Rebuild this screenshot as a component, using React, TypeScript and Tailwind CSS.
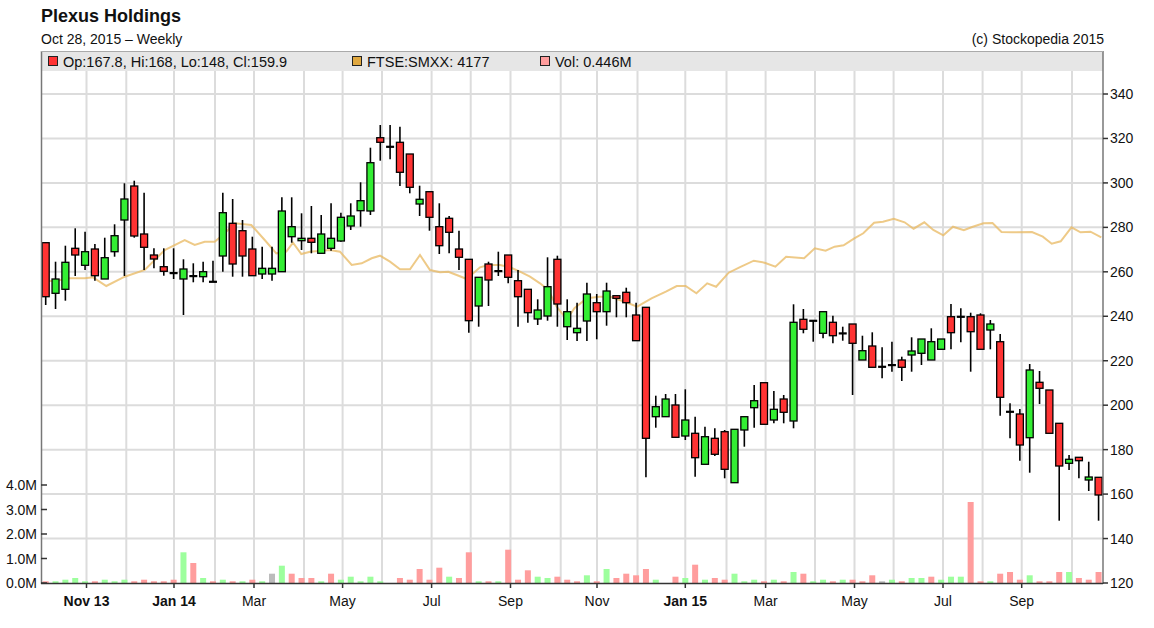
import React from "react";

type C = [number, number, number, number, string];
const candles: C[] = [
[242.7,296.7,242.7,305,"r"],[279,293.3,261.7,309,"g"],[262.3,289.3,245.7,300.7,"g"],[248.3,255,228.3,276,"r"],[251.7,265.3,231.7,270,"g"],
[249,275.7,244,280.7,"r"],[257.7,279,237.7,279,"g"],[235.7,251.7,224.3,256.7,"g"],[199,220,183.3,276,"g"],[186,236,180.7,237.7,"r"],
[234,247.3,192.7,270,"r"],[255,259,248.3,268.3,"r"],[266.7,271.3,248.3,275.7,"r"],[273,273,248.3,279,"d"],[269,279,259.3,315,"g"],
[276,276,263.3,282.3,"d"],[271.7,276.7,261.7,282.3,"g"],[281.7,281.7,260.7,281.7,"d"],[212.7,256,192.7,271.7,"g"],[223.3,264,199,276.7,"r"],
[230.7,256,220,276.7,"r"],[249,275.7,236.7,275.7,"r"],[268.3,274,246.7,279,"g"],[268.3,274,246.7,280.7,"g"],[211,271.7,197.3,271.7,"g"],
[226.7,236.7,197.3,242.7,"g"],[238.3,240.7,213.3,250,"g"],[238.3,242.3,206,253.3,"r"],[234,253.3,215,253.3,"g"],[238.3,248.3,203.3,250.7,"g"],
[217.3,241,212.7,241.7,"g"],[216,226,203.3,230,"g"],[200.7,210.7,182.3,226.7,"g"],[162.7,211,147.7,215,"g"],[137.7,142.3,125,160.7,"r"],
[146.7,146.7,125,159.3,"d"],[142.3,172.3,126.7,186,"r"],[154,187.3,154,193.3,"r"],[199.3,204,185.7,216,"g"],[191.7,217.3,191.7,230.7,"r"],
[226.7,245.7,203.3,254,"r"],[218.3,232.3,216,253.3,"r"],[249,257.3,230.7,270,"r"],[259.3,320.7,259.3,332.7,"r"],[277.3,306,277.3,326.7,"g"],
[264,280,261.7,306,"r"],[271,271,251.7,276,"d"],[255,277.3,255,283.3,"r"],[280.7,296.7,270,326.7,"r"],[289.3,312.7,289.3,322.7,"r"],
[310,319,299.3,325,"g"],[286.7,316,257.3,320.7,"g"],[259.3,304,255.7,326.7,"r"],[311.7,326.7,299.3,340,"g"],[328.3,332.7,302.7,341,"g"],
[294,321,282.7,341,"g"],[302.7,311.7,294,339.3,"r"],[291,311.7,282.7,325.7,"g"],[295.7,298.3,295.7,317.3,"r"],[292.3,302.7,287.7,317.3,"r"],
[315,340.7,302.7,340.7,"r"],[307.3,438.3,307.3,477.3,"r"],[406.7,416.7,395.7,427.7,"g"],[399,416.7,394,416.7,"g"],[405,437.3,394,437.3,"r"],
[420,436,389.3,440,"g"],[433.3,457.7,416.7,476.7,"r"],[436.7,464.3,426.7,464.3,"g"],[438.3,454.3,428.3,456,"r"],[431.7,469.3,430,478.3,"r"],
[429.3,482.7,429.3,482.7,"g"],[416.7,430,416.7,446.7,"g"],[400.7,407.7,385,427.7,"g"],[382.7,424.3,382.7,424.3,"r"],[409.3,420,391,423.3,"g"],
[399,412.3,395,423.3,"r"],[322.3,421,304.3,428.3,"g"],[319.3,329.3,309,333.3,"r"],[320.7,320.7,320.7,341.7,"d"],[311.7,333.3,311.7,338.3,"g"],
[322.3,335.7,315.7,343.3,"r"],[333.3,333.3,326.7,340.7,"d"],[324,343.3,324,395,"r"],[350.7,360,335.7,360,"g"],[346,367.3,332.3,367.3,"r"],
[366.7,366.7,347.3,378.3,"d"],[365,365,341.7,371.7,"d"],[360,367.3,356.7,381,"r"],[351,355,337.3,371.7,"g"],[339,353.3,339,365,"g"],
[341.7,360,328.3,360,"g"],[339,349.3,339,349.3,"g"],[316.7,332.7,304,349.3,"r"],[316.7,316.7,308.3,342.3,"d"],[316.7,331.7,312.7,371.7,"r"],
[315,349.3,313.3,349.3,"r"],[324,330,320,349.3,"g"],[341.7,397.3,334,415.7,"r"],[411.7,411.7,403.3,438.3,"d"],[414,445,409,460.7,"r"],
[370,437.7,364,472.7,"g"],[382.3,388.3,371,404,"r"],[390,433.3,390,433.3,"r"],[423.3,466,423.3,520.7,"r"],[459.3,463.3,455,470,"g"],
[457.3,460.7,457.3,478.3,"r"],[477,480,461.7,491,"g"],[477.3,495,477.3,520.7,"r"],
];

const vols: [number, string][] = [
[1.7,"r"],[1.7,"g"],[3.3,"g"],[5,"g"],[1.7,"g"],[1.7,"r"],[3.3,"g"],[1.7,"g"],[3.3,"g"],[1.7,"r"],
[3.3,"r"],[1.7,"r"],[1.7,"r"],[3.3,"r"],[30.7,"g"],[20,"r"],[5,"g"],[1.7,"r"],[3.3,"g"],[1.7,"r"],
[1.7,"g"],[3.3,"r"],[1.7,"g"],[9.3,"x"],[17.3,"g"],[9.3,"r"],[5,"r"],[5,"r"],[1.7,"g"],[9.3,"r"],
[3.3,"g"],[6.3,"g"],[1.7,"g"],[6.3,"g"],[1.7,"g"],[0,"r"],[5,"r"],[3.3,"r"],[14,"r"],[3.3,"r"],
[15.3,"r"],[6.3,"g"],[5,"r"],[30.7,"r"],[1.7,"g"],[1.7,"r"],[1.7,"g"],[33.3,"r"],[3.3,"r"],[12.7,"r"],
[6.3,"g"],[5,"g"],[6.3,"r"],[3.3,"r"],[1.7,"r"],[7.7,"g"],[1.7,"r"],[14,"g"],[5,"r"],[9.3,"r"],
[7.7,"r"],[14,"r"],[3.3,"g"],[0,"r"],[6.3,"r"],[5,"g"],[18.3,"r"],[3.3,"g"],[5,"r"],[3.3,"r"],
[9.3,"g"],[1.7,"g"],[3.3,"g"],[1.7,"r"],[3.3,"g"],[1.7,"r"],[11,"g"],[9.3,"r"],[1.7,"g"],[3.3,"g"],
[1.7,"r"],[3.3,"g"],[3.3,"r"],[1.7,"r"],[7.7,"r"],[1.7,"x"],[3.3,"g"],[1.7,"r"],[5,"g"],[5,"g"],
[6.3,"r"],[3.3,"g"],[6.3,"g"],[6.3,"g"],[81,"r"],[1.7,"r"],[1.7,"g"],[9.3,"r"],[11,"r"],[3.3,"r"],
[7.7,"g"],[1.7,"r"],[1.7,"r"],[11,"r"],[11,"g"],[5,"r"],[3.3,"r"],[11,"r"],
];

const ftse: [number, number][] = [
[41,281],[55,281],[69.7,278.3],[84.7,278.3],[93,277.3],[106.3,286],[124.7,276.7],[144.7,270],[164.7,250],[184.7,240],[194.7,245],[204.7,241.7],
[214.7,241.7],[224.7,233.3],[234.7,223.3],[251.3,225],[264.7,240],[276.3,253.3],[286.3,251.7],[293,242.7],[301.3,254],[310,251.7],
[330,250],[340,251.7],[351.7,265],[361.7,263.3],[371.7,258.3],[380,255.7],[390,261.7],[400,269.3],[410,269.3],[420,255],[430,270],
[440,272.3],[448.3,271.7],[456.7,275],[465,278.3],[473.3,273.3],[480,267.3],[488.3,265],[500,265],[510,267.3],[520,271.7],[530,276.7],
[540,283.3],[548.3,290],[556.7,306.7],[563.3,315],[568,318],[574.4,308.3],[586.9,298.3],[599.5,296.7],[610.3,296.7],[624.6,301.7],
[637.2,306.7],[651.5,298.3],[665.9,291.7],[676.7,286],[685.6,286],[696.4,293.3],[707.2,283.3],[716.1,286.7],[728.7,272.7],[739.5,267.3],
[753.8,260.7],[764.6,262.7],[775.4,266.7],[786.1,256.7],[804.1,258.3],[814.8,248.3],[825.6,250.7],[834.6,246.7],[843.6,245.3],
[854.3,238.3],[863.3,233.3],[874.1,222.7],[883,221.7],[893.8,218.7],[904.6,222.3],[913.6,228.7],[924.3,222.3],[933.3,230],[943.3,235.3],
[953,226.7],[963.8,230.3],[972.8,226.7],[983.5,223.3],[992.5,223],[1001.5,232],[1012.3,232.3],[1032,232],[1042.8,236.7],[1051.7,243.7],
[1060.7,241.3],[1071.5,227.3],[1080.5,232.3],[1090.5,231.7],[1101.3,237.3],
];

const vGrid = [86.5,126.3,174,215,254,304,342.6,382,431.6,470.7,510.5,560.7,597,637.5,685.3,726.5,765.6,815,854.5,893.6,943,982.6,1021.7,1072];
const months: [number, string, boolean][] = [
[86.5,"Nov 13",true],[174,"Jan 14",true],[254,"Mar",false],[342.6,"May",false],[431.6,"Jul",false],[510.5,"Sep",false],
[597,"Nov",false],[685.3,"Jan 15",true],[765.6,"Mar",false],[854.5,"May",false],[943,"Jul",false],[1021.7,"Sep",false],
];
const prices = [340,320,300,280,260,240,220,200,180,160,140,120];
const py = (p: number) => 583 - (p - 120) * 2.2227;
const volTicks: [number, string][] = [[485,"4.0M"],[509.5,"3.0M"],[534,"2.0M"],[558.5,"1.0M"],[583,"0.0M"]];

const cx = (i: number) => 45.7 + i * 9.84;
const fill = { r: "#ff3333", g: "#33ee33" } as Record<string, string>;
const vfill = { r: "#ff9d9d", g: "#9dff9d", x: "#bbbbbb" } as Record<string, string>;

export default function App() {
  return (
    <div className="w-[1154px] h-[628px] bg-white relative overflow-hidden" style={{ fontFamily: '"Liberation Sans", Arial, sans-serif' }}>
      <div className="h-[51px] pl-[41px] pr-[50px] pt-[5px] flex flex-col">
        <div className="text-[18px] font-bold text-[#111] leading-[22px]">Plexus Holdings</div>
        <div className="flex justify-between text-[14px] text-[#111] leading-[16px] mt-[4px]">
          <span>Oct 28, 2015 – Weekly</span>
          <span>(c) Stockopedia 2015</span>
        </div>
      </div>
      <svg width="1154" height="577" viewBox="0 51 1154 577" className="block">
        <defs>
          <clipPath id="plot"><rect x="41" y="71" width="1062" height="512" /></clipPath>
        </defs>
        <rect x="41" y="51" width="1062" height="20" fill="#e6e6e6" />
        <g stroke="#dcdcdc" strokeWidth="2">
          {vGrid.map((x) => <line key={x} x1={x} y1={71} x2={x} y2={583} />)}
          {prices.slice(0, 11).map((p) => <line key={p} x1={41} y1={py(p)} x2={1103} y2={py(p)} />)}
        </g>
        <g clipPath="url(#plot)">
          {vols.map(([h, c], i) => h > 0 && <rect key={i} x={cx(i) - 3} y={583 - h} width={6} height={h} fill={vfill[c]} />)}
          <polyline points={ftse.map((p) => p.join(",")).join(" ")} fill="none" stroke="#e8b860" strokeOpacity="0.75" strokeWidth="2" />
          {candles.map(([t, b, h, l, c], i) => {
            const x = cx(i);
            return (
              <g key={i}>
                <line x1={x} y1={h} x2={x} y2={l} stroke="#000" strokeWidth="1.6" />
                {c === "d" ? (
                  <rect x={x - 4} y={t - 1} width={8} height={2.2} fill="#000" />
                ) : (
                  <rect x={x - 3.5} y={t} width={7} height={Math.max(b - t, 2)} fill={fill[c]} stroke="#000" strokeWidth="1.3" />
                )}
              </g>
            );
          })}
        </g>
        <line x1="41.5" y1="51" x2="41.5" y2="584" stroke="#777" strokeWidth="1.5" />
        <line x1="1103" y1="51" x2="1103" y2="584" stroke="#777" strokeWidth="1.5" />
        <line x1="41" y1="51.5" x2="1103" y2="51.5" stroke="#aaa" strokeWidth="1" />
        <line x1="41" y1="583.5" x2="1103" y2="583.5" stroke="#333" strokeWidth="1.5" />
        <g fontSize="14" fill="#111">
          {prices.map((p) => (
            <g key={p}>
              <line x1={1103} y1={py(p)} x2={1108} y2={py(p)} stroke="#333" strokeWidth="1.5" />
              <text x={1110} y={py(p) + 5}>{p}</text>
            </g>
          ))}
          {volTicks.map(([y, t]) => (
            <g key={t}>
              <line x1={41} y1={y} x2={47} y2={y} stroke="#333" strokeWidth="1.5" />
              <text x={37} y={y + 5} textAnchor="end">{t}</text>
            </g>
          ))}
          {months.map(([x, t, b]) => (
            <g key={t + x}>
              <line x1={x} y1={583} x2={x} y2={588} stroke="#333" strokeWidth="1.5" />
              <text x={x} y={606} textAnchor="middle" fontWeight={b ? "bold" : "normal"}>{t}</text>
            </g>
          ))}
        </g>
        <g fontSize="14.5" fill="#111">
          <rect x="48.5" y="56.5" width="9" height="9" fill="#ff3333" stroke="#222" />
          <text x="63" y="66.5">Op:167.8, Hi:168, Lo:148, Cl:159.9</text>
          <rect x="352.5" y="56.5" width="9" height="9" fill="#e0a840" stroke="#222" />
          <text x="367" y="66.5">FTSE:SMXX: 4177</text>
          <rect x="540.5" y="56.5" width="9" height="9" fill="#ff9d9d" stroke="#222" />
          <text x="555" y="66.5">Vol: 0.446M</text>
        </g>
      </svg>
    </div>
  );
}
